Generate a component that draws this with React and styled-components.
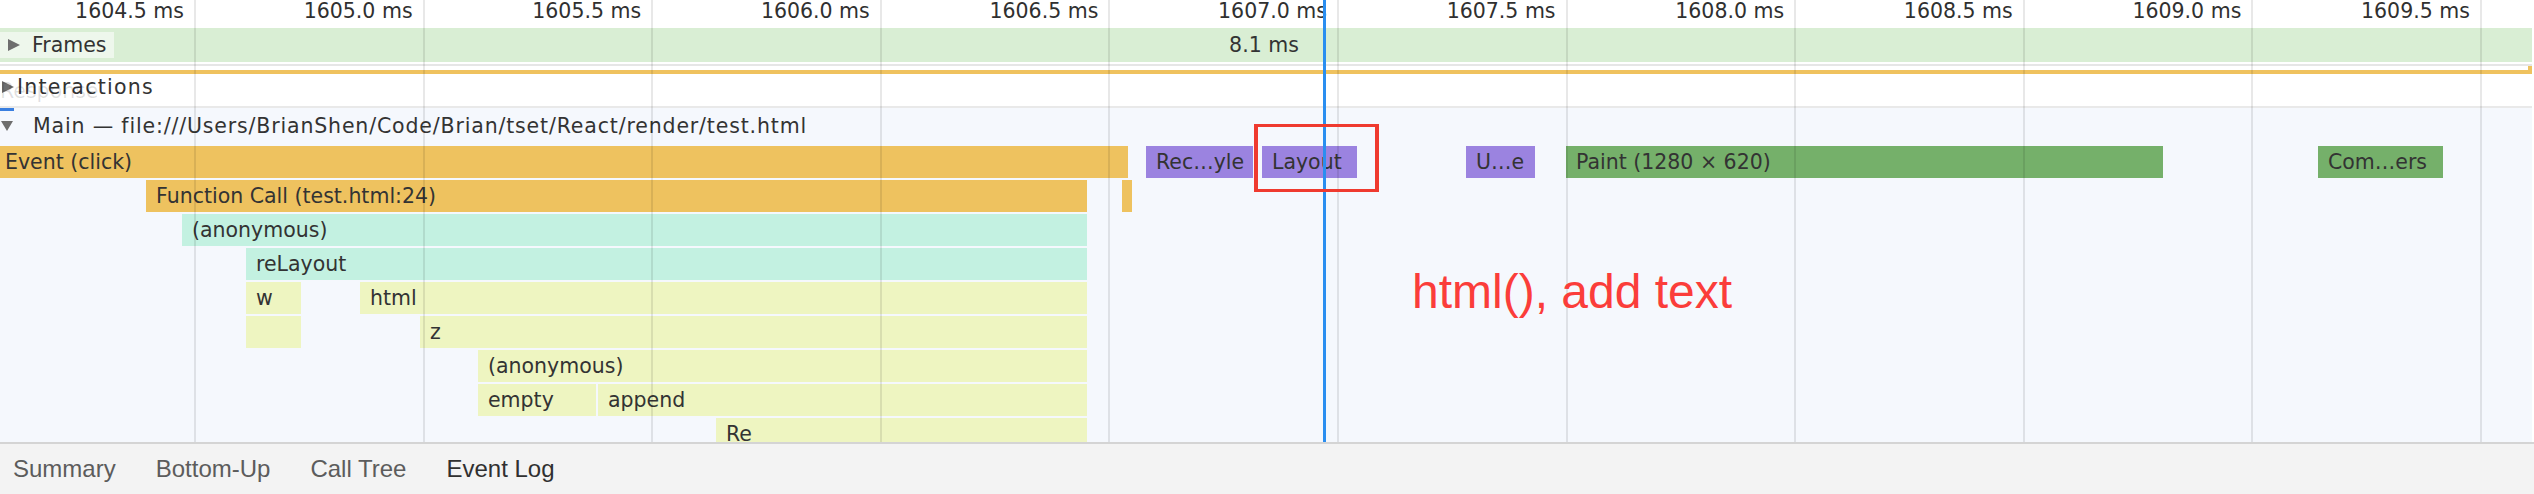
import React from "react";
import styled, { createGlobalStyle } from "styled-components";

const GlobalStyle = createGlobalStyle`
  html, body { margin: 0; padding: 0; background: #fff; }
  body { overflow: hidden; }
`;

const TICKS = [
  "1604.5 ms", "1605.0 ms", "1605.5 ms", "1606.0 ms", "1606.5 ms", "1607.0 ms",
  "1607.5 ms", "1608.0 ms", "1608.5 ms", "1609.0 ms", "1609.5 ms",
];
const COLS = "196px repeat(10, 228.6px) 1fr";

const COLORS = {
  orange: "#eec25f",
  purple: "#9b83e0",
  green: "#75b06a",
  teal: "#c3f1e1",
  yellow: "#eef5c1",
};

const ROWS = [
  [
    { l: -5, r: 1128, c: "orange", t: "Event (click)" },
    { l: 1146, r: 1253, c: "purple", t: "Rec…yle" },
    { l: 1262, r: 1357, c: "purple", t: "Layout" },
    { l: 1466, r: 1535, c: "purple", t: "U…e" },
    { l: 1566, r: 2163, c: "green", t: "Paint (1280 × 620)" },
    { l: 2318, r: 2443, c: "green", t: "Com…ers" },
  ],
  [
    { l: 146, r: 1087, c: "orange", t: "Function Call (test.html:24)" },
    { l: 1122, r: 1127, c: "orange", t: "" },
  ],
  [{ l: 182, r: 1087, c: "teal", t: "(anonymous)" }],
  [{ l: 246, r: 1087, c: "teal", t: "reLayout" }],
  [
    { l: 246, r: 301, c: "yellow", t: "w" },
    { l: 360, r: 1087, c: "yellow", t: "html" },
  ],
  [
    { l: 246, r: 301, c: "yellow", t: "" },
    { l: 420, r: 1087, c: "yellow", t: "z" },
  ],
  [{ l: 478, r: 1087, c: "yellow", t: "(anonymous)" }],
  [
    { l: 478, r: 596, c: "yellow", t: "empty" },
    { l: 598, r: 1087, c: "yellow", t: "append" },
  ],
  [{ l: 716, r: 1087, c: "yellow", t: "Re" }],
];

const Panel = styled.div`
  width: 2534px;
  height: 494px;
  display: flex;
  flex-direction: column;
  overflow: hidden;
  font-family: "DejaVu Sans", Verdana, sans-serif;
  font-size: 20.5px;
  color: #333;
`;

const Timeline = styled.div`
  position: relative;
  flex: 1;
  min-height: 0;
  display: flex;
  flex-direction: column;
  margin-right: 2px;
`;

const Ruler = styled.div`
  height: 28px;
  flex: none;
  display: grid;
  grid-template-columns: ${COLS};
  background: #fff;
  color: #303030;
`;

const Tick = styled.div`
  text-align: right;
  padding-right: 12px;
  line-height: 22px;
  white-space: nowrap;
`;

const FramesRow = styled.div`
  height: 34px;
  flex: none;
  display: grid;
  background: #d9eed4;
`;

const FramesLabel = styled.div`
  grid-area: 1 / 1;
  justify-self: start;
  align-self: center;
  height: 26px;
  display: flex;
  align-items: center;
  gap: 12px;
  padding: 0 7px 0 8px;
  background: rgba(255, 255, 255, 0.55);
  line-height: 26px;
`;

const FrameTime = styled.div`
  grid-area: 1 / 1;
  justify-self: center;
  line-height: 34px;
  margin-right: 4px;
`;

const RightTriangle = styled.span`
  width: 0;
  height: 0;
  border-left: 12px solid #6e6e6e;
  border-top: 6px solid transparent;
  border-bottom: 6px solid transparent;
  flex: none;
`;

const DownTriangle = styled.span`
  width: 0;
  height: 0;
  border-top: 10px solid #6e6e6e;
  border-left: 6px solid transparent;
  border-right: 6px solid transparent;
  flex: none;
`;

const Spacer = styled.div`
  height: ${(p) => p.$h}px;
  flex: none;
  background: ${(p) => p.$bg || "#fff"};
`;

const InteractionLine = styled.div`
  position: relative;
  height: 4px;
  flex: none;
  background: #efc25f;
  &::after {
    content: "";
    position: absolute;
    right: 0;
    bottom: 100%;
    width: 4px;
    height: 4px;
    background: #efc25f;
  }
`;

const InteractionsRow = styled.div`
  position: relative;
  height: 32px;
  flex: none;
  display: flex;
  align-items: flex-start;
  background: #fff;
`;

const TrackLabel = styled.div`
  position: relative;
  display: flex;
  align-items: center;
  gap: ${(p) => p.$gap}px;
  padding-left: ${(p) => p.$pad}px;
  line-height: ${(p) => p.$lh}px;
  height: ${(p) => p.$lh}px;
  letter-spacing: ${(p) => p.$ls || 0}px;
  white-space: nowrap;
`;

const Ghost = styled.span`
  position: absolute;
  left: 0;
  top: 4px;
  line-height: 26px;
  letter-spacing: 0;
  color: rgba(0, 0, 0, 0.12);
  white-space: nowrap;
`;

const MarkerStrip = styled.div`
  height: 3px;
  flex: none;
  background: #f5f8fd;
  &::before {
    content: "";
    display: block;
    width: 14px;
    height: 3px;
    background: #3a7fe0;
  }
`;

const MainHeader = styled.div`
  height: 34px;
  flex: none;
  background: #f5f8fd;
`;

const Flame = styled.div`
  flex: 1;
  min-height: 0;
  overflow: hidden;
  background: #f5f8fd;
  padding-top: 1px;
  display: flex;
  flex-direction: column;
  gap: 2px;
`;

const FlameRow = styled.div`
  position: relative;
  height: 32px;
  flex: none;
`;

const Bar = styled.div`
  position: absolute;
  top: 0;
  height: 32px;
  box-sizing: border-box;
  padding-left: 10px;
  line-height: 32px;
  white-space: nowrap;
  overflow: hidden;
  color: #333;
  background: ${(p) => COLORS[p.$c]};
`;

const GridOverlay = styled.div`
  position: absolute;
  inset: 0;
  display: grid;
  grid-template-columns: ${COLS};
  pointer-events: none;
`;

const GridCell = styled.div`
  box-sizing: border-box;
  border-right: ${(p) => (p.$last ? "none" : "2px solid rgba(0, 0, 0, 0.09)")};
`;

const Cursor = styled.div`
  position: absolute;
  top: 0;
  bottom: 0;
  left: 1323px;
  width: 3px;
  background: #2a8ef0;
  pointer-events: none;
`;

const AnnotationBox = styled.div`
  position: absolute;
  left: 1254px;
  top: 124px;
  width: 125px;
  height: 68px;
  box-sizing: border-box;
  border: 3px solid #ef3a2f;
  border-left-width: 4px;
  border-right-width: 4px;
  pointer-events: none;
`;

const AnnotationText = styled.div`
  position: absolute;
  left: 1412px;
  top: 268px;
  font-family: "Liberation Sans", Arial, sans-serif;
  font-size: 48px;
  line-height: 48px;
  color: #fb3d3a;
  white-space: nowrap;
`;

const BottomRule = styled.div`
  height: 2px;
  flex: none;
  background: #d4d4d4;
`;

const TabBar = styled.div`
  height: 50px;
  flex: none;
  display: flex;
  gap: 40px;
  padding-left: 13px;
  background: #f3f3f3;
  font-family: "Liberation Sans", Arial, sans-serif;
  font-size: 24px;
  line-height: 50px;
`;

const Tab = styled.div`
  color: ${(p) => (p.$active ? "#303030" : "#5c5c5c")};
  white-space: nowrap;
`;

export default function App() {
  return (
    <>
      <GlobalStyle />
      <Panel>
        <Timeline>
          <Ruler>
            {TICKS.map((t) => (
              <Tick key={t}>{t}</Tick>
            ))}
          </Ruler>
          <FramesRow>
            <FramesLabel>
              <RightTriangle />
              <span>Frames</span>
            </FramesLabel>
            <FrameTime>8.1 ms</FrameTime>
          </FramesRow>
          <Spacer $h={2} />
          <Spacer $h={2} $bg="#e6e6e6" />
          <Spacer $h={4} />
          <InteractionLine />
          <InteractionsRow>
            <TrackLabel $pad={2} $gap={3} $lh={26} $ls={1.25}>
              <Ghost>Response</Ghost>
              <RightTriangle />
              <span>Interactions</span>
            </TrackLabel>
          </InteractionsRow>
          <Spacer $h={2} $bg="#e9e9e9" />
          <MarkerStrip />
          <MainHeader>
            <TrackLabel $pad={1} $gap={20} $lh={30} $ls={0.84}>
              <DownTriangle />
              <span>Main — file:///Users/BrianShen/Code/Brian/tset/React/render/test.html</span>
            </TrackLabel>
          </MainHeader>
          <Flame>
            {ROWS.map((row, i) => (
              <FlameRow key={i}>
                {row.map((b, j) => (
                  <Bar key={j} $c={b.c} style={{ left: b.l, width: b.r - b.l }}>
                    {b.t}
                  </Bar>
                ))}
              </FlameRow>
            ))}
          </Flame>
          <GridOverlay>
            {TICKS.map((t) => (
              <GridCell key={t} />
            ))}
            <GridCell $last />
          </GridOverlay>
          <Cursor />
          <AnnotationBox />
          <AnnotationText>html(), add text</AnnotationText>
        </Timeline>
        <BottomRule />
        <TabBar>
          <Tab>Summary</Tab>
          <Tab>Bottom-Up</Tab>
          <Tab>Call Tree</Tab>
          <Tab $active>Event Log</Tab>
        </TabBar>
      </Panel>
    </>
  );
}
